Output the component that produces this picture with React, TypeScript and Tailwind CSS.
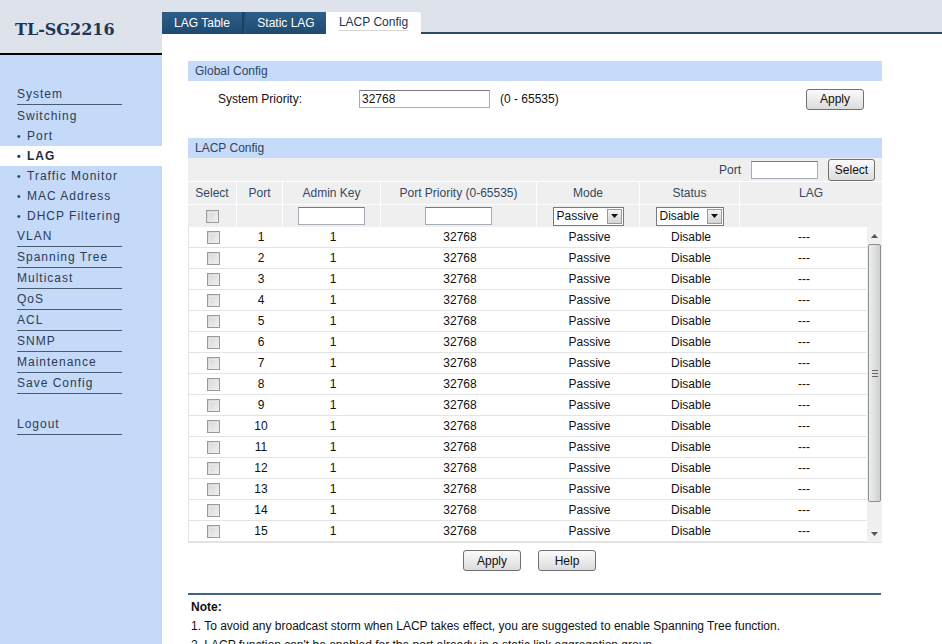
import { ReactNode } from 'react';

type NavItem = {
  label: string;
  sub?: boolean;
  line?: boolean;
  active?: boolean;
  h: string;
};

const navItems: NavItem[] = [
  { label: 'System', line: true, h: 'h-[21px]' },
  { label: 'Switching', h: 'h-[21px]' },
  { label: 'Port', sub: true, h: 'h-[20px]' },
  { label: 'LAG', sub: true, active: true, h: 'h-[20px]' },
  { label: 'Traffic Monitor', sub: true, h: 'h-[20px]' },
  { label: 'MAC Address', sub: true, h: 'h-[20px]' },
  { label: 'DHCP Filtering', sub: true, h: 'h-[20px]' },
  { label: 'VLAN', line: true, h: 'h-[21px]' },
  { label: 'Spanning Tree', line: true, h: 'h-[21px]' },
  { label: 'Multicast', line: true, h: 'h-[21px]' },
  { label: 'QoS', line: true, h: 'h-[21px]' },
  { label: 'ACL', line: true, h: 'h-[21px]' },
  { label: 'SNMP', line: true, h: 'h-[21px]' },
  { label: 'Maintenance', line: true, h: 'h-[21px]' },
  { label: 'Save Config', line: true, h: 'h-[21px]' },
];

const ports = Array.from({ length: 15 }, (_, i) => i + 1);

const Button = ({ children, className }: { children: ReactNode; className?: string }) => (
  <button
    className={
      'flex h-[21px] items-center justify-center rounded-[3px] border border-[#707070] bg-gradient-to-b from-[#fbfbfb] to-[#dcdcdc] text-[12px] text-[#111] ' +
      (className ?? 'w-[58px]')
    }
  >
    {children}
  </button>
);

const Checkbox = () => (
  <div className="h-[13px] w-[13px] border border-[#9a9a9a] bg-gradient-to-br from-[#d2d2d2] to-[#f4f4f4] p-[1px]">
    <div className="h-full w-full border border-[#e8e8e8]" />
  </div>
);

const TextBox = ({ className, value }: { className: string; value?: string }) => (
  <div
    className={
      'flex h-[18px] items-center border border-[#a5acb5] border-t-[#7a7a7a] bg-white px-[2px] text-[12px] text-[#111] ' +
      className
    }
  >
    {value}
  </div>
);

const Select = ({ value, className }: { value: string; className: string }) => (
  <div
    className={
      'flex h-[19px] items-center justify-between border border-[#7a7a7a] bg-white pl-[3px] pr-[1px] text-[12px] text-[#111] ' +
      className
    }
  >
    <span>{value}</span>
    <div className="flex h-[15px] w-[15px] items-center justify-center border border-[#9a9a9a] bg-gradient-to-b from-[#f4f4f4] to-[#d4d4d4]">
      <svg width="7" height="4" viewBox="0 0 7 4">
        <path d="M0 0h7L3.5 4z" fill="#111" />
      </svg>
    </div>
  </div>
);

const Band = ({ title }: { title: string }) => (
  <div className="flex h-[20px] shrink-0 items-center bg-[#c6daf9] pl-[7px] text-[12px] text-[#2f4662]">
    {title}
  </div>
);

const headCols = 'grid grid-cols-[49px_46px_98px_156px_103px_100px_142px]';
const bodyCols = 'grid grid-cols-[49px_46px_98px_156px_103px_100px_126px]';

const App = () => {
  return (
    <div className="flex h-[644px] w-[942px] overflow-hidden bg-white font-['Liberation_Sans',Arial,sans-serif]">
      {/* left menu */}
      <div className="flex w-[162px] shrink-0 flex-col">
        <div className="flex h-[53px] shrink-0 items-center bg-[#dee3eb] pl-[15px] pt-[6px] font-['DejaVu_Serif',serif] text-[16px] font-bold text-[#1f3654]">
          TL-SG2216
        </div>
        <div className="h-[2px] shrink-0 bg-black" />
        <div className="flex flex-1 flex-col bg-[#c5d9f9] pt-[29px] text-[12px] tracking-[1px] text-[#2b3c55]">
          {navItems.map((item) => (
            <div
              key={item.label}
              className={
                'flex shrink-0 items-center ' +
                item.h +
                (item.active ? ' bg-white font-bold text-[#1b2a40]' : '')
              }
            >
              <div
                className={
                  'ml-[17px] flex h-full w-[105px] items-center ' +
                  (item.line ? 'border-b border-[#4a5a70]' : '')
                }
              >
                {item.sub && <span className="w-[10px] text-[10px]">•</span>}
                <span>{item.label}</span>
              </div>
            </div>
          ))}
          <div className="mt-[20px] flex h-[21px] shrink-0 items-center">
            <div className="ml-[17px] flex h-full w-[105px] items-center border-b border-[#4a5a70]">
              Logout
            </div>
          </div>
        </div>
      </div>

      {/* main */}
      <div className="flex flex-1 flex-col">
        <div className="flex h-[34px] shrink-0 items-end bg-[#dee3eb]">
          <div className="flex h-[22px] w-[80px] items-center justify-center bg-gradient-to-b from-[#2f5f88] to-[#1c4a72] text-[12px] text-white">
            LAG Table
          </div>
          <div className="h-[22px] w-[4px] bg-gradient-to-r from-[#163a5a] to-[#2a5880]" />
          <div className="flex h-[22px] w-[80px] items-center justify-center bg-gradient-to-b from-[#2f5f88] to-[#1c4a72] text-[12px] text-white">
            Static LAG
          </div>
          <div className="flex h-[22px] w-[95px] items-center justify-center rounded-tr-[3px] bg-white text-[12px] text-[#23344d]">
            <span className="border-b border-[#d6d6d6] leading-[15px]">LACP Config</span>
          </div>
          <div className="h-full flex-1 border-b-2 border-[#2e4a64]" />
        </div>

        <div className="flex w-[720px] shrink-0 flex-col pl-[26px] pt-[27px]">
          <Band title="Global Config" />
          <div className="mt-[7px] flex h-[22px] items-center text-[12px] text-[#111]">
            <span className="ml-[30px] w-[141px]">System Priority:</span>
            <TextBox className="w-[131px]" value="32768" />
            <span className="ml-[10px]">(0 - 65535)</span>
            <div className="flex-1" />
            <Button className="mr-[18px] w-[58px]">Apply</Button>
          </div>

          <div className="mt-[28px]">
            <Band title="LACP Config" />
          </div>
          <div className="flex h-[24px] items-center justify-end border-b border-white bg-[#efefef] pr-[7px] text-[12px] text-[#2f4662]">
            <span>Port</span>
            <TextBox className="ml-[10px] w-[67px]" />
            <Button className="ml-[10px] h-[22px] w-[47px]">Select</Button>
          </div>

          <div className={headCols + ' h-[22px] bg-[#efefef] text-[12px] text-[#34495f]'}>
            {['Select', 'Port', 'Admin Key', 'Port Priority (0-65535)', 'Mode', 'Status', 'LAG'].map((h, i) => (
              <div
                key={h}
                className={'flex items-center justify-center ' + (i < 6 ? 'border-r border-white' : '')}
              >
                {h}
              </div>
            ))}
          </div>
          <div className={headCols + ' h-[23px] border-t border-white bg-[#efefef]'}>
            <div className="flex items-center justify-center border-r border-white">
              <Checkbox />
            </div>
            <div className="border-r border-white" />
            <div className="flex items-center justify-center border-r border-white">
              <TextBox className="w-[67px]" />
            </div>
            <div className="flex items-center justify-center border-r border-white">
              <TextBox className="w-[67px]" />
            </div>
            <div className="flex items-center justify-center border-r border-white">
              <Select value="Passive" className="w-[71px]" />
            </div>
            <div className="flex items-center justify-center border-r border-white">
              <Select value="Disable" className="w-[68px]" />
            </div>
            <div />
          </div>

          <div className="flex h-[316px] border-b border-l border-[#e2e2e2]">
            <div className="flex flex-1 flex-col">
              {ports.map((p) => (
                <div
                  key={p}
                  className={bodyCols + ' h-[21px] shrink-0 border-b border-[#e4e4e4] text-[12px] text-[#111]'}
                >
                  <div className="flex items-center justify-center pr-[1px]">
                    <Checkbox />
                  </div>
                  <div className="flex items-center justify-center">{p}</div>
                  <div className="flex items-center justify-center">1</div>
                  <div className="flex items-center justify-center">32768</div>
                  <div className="flex items-center justify-center">Passive</div>
                  <div className="flex items-center justify-center">Disable</div>
                  <div className="flex items-center justify-center">---</div>
                </div>
              ))}
            </div>
            {/* scrollbar */}
            <div className="flex w-[16px] flex-col bg-[#f0f0f0]">
              <div className="flex h-[17px] items-center justify-center">
                <svg width="7" height="4" viewBox="0 0 7 4">
                  <path d="M3.5 0L7 4H0z" fill="#555" />
                </svg>
              </div>
              <div className="mx-[1px] flex h-[258px] items-center justify-center rounded-[2px] border border-[#8e8f91] bg-gradient-to-r from-[#eceded] via-[#dedfe0] to-[#cfd0d2]">
                <div className="flex flex-col gap-[2px]">
                  <div className="h-px w-[6px] bg-[#666]" />
                  <div className="h-px w-[6px] bg-[#666]" />
                  <div className="h-px w-[6px] bg-[#666]" />
                </div>
              </div>
              <div className="flex-1" />
              <div className="flex h-[17px] items-center justify-center">
                <svg width="7" height="4" viewBox="0 0 7 4">
                  <path d="M0 0h7L3.5 4z" fill="#555" />
                </svg>
              </div>
            </div>
          </div>

          <div className="mt-[7px] flex justify-center gap-[17px] pr-[11px]">
            <Button>Apply</Button>
            <Button>Help</Button>
          </div>

          <div className="mt-[22px] h-[2px] w-[693px] bg-[#3d6487]" />
          <div className="mt-[3px] pl-[3px] text-[12px] leading-[19px] text-[#111]">
            <div className="font-bold">Note:</div>
            <div>1. To avoid any broadcast storm when LACP takes effect, you are suggested to enable Spanning Tree function.</div>
            <div>2. LACP function can't be enabled for the port already in a static link aggregation group.</div>
          </div>
        </div>
      </div>
    </div>
  );
};

export default App;
